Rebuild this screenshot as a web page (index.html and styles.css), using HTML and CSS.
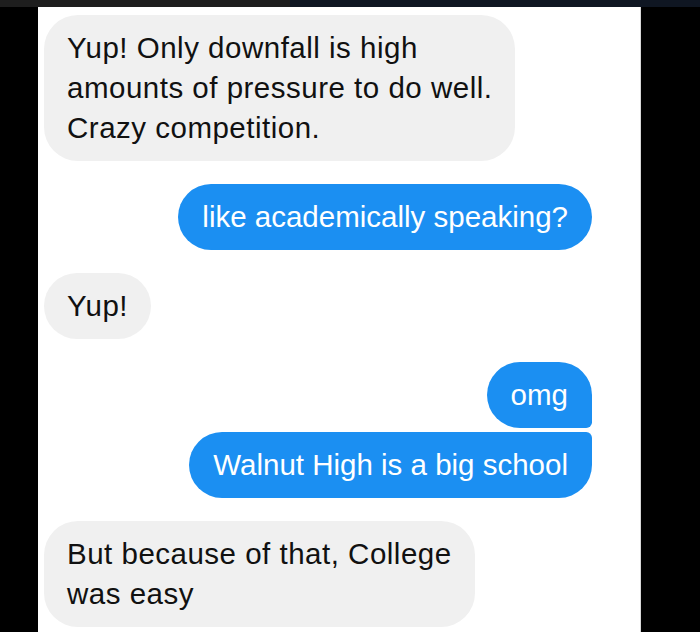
FILE: index.html
```html
<!DOCTYPE html>
<html lang="en">
<head>
<meta charset="utf-8">
<title>Chat</title>
<link rel="stylesheet" href="styles.css">
</head>
<body>
  <div class="topbar"></div>
  <div class="stage">
    <div class="chat">
      <div class="bubble in">Yup! Only downfall is high<br>amounts of pressure to do well.<br>Crazy competition.</div>
      <div class="bubble out">like academically speaking?</div>
      <div class="bubble in">Yup!</div>
      <div class="group">
        <div class="bubble out first">omg</div>
        <div class="bubble out last">Walnut High is a big school</div>
      </div>
      <div class="bubble in">But because of that, College<br>was easy</div>
    </div>
  </div>
</body>
</html>
```
FILE: styles.css
```css
html, body {
  margin: 0;
  padding: 0;
  background: #000;
  height: 632px;
  overflow: hidden;
}

.topbar {
  height: 7px;
  background: linear-gradient(to right, #1e1e1e 0, #1e1e1e 290px, #0f1622 290px, #0f1622 100%);
}

.stage {
  padding-left: 38px;
}

.chat {
  width: 603px;
  height: 625px;
  box-sizing: border-box;
  background: #fff;
  border-right: 1px solid #d8d8d8;
  padding: 8px 48px 0 6px;
  display: flex;
  flex-direction: column;
  gap: 23px;
  font-family: "Liberation Sans", Arial, sans-serif;
  font-size: 29.5px;
  line-height: 40px;
}

.group {
  display: flex;
  flex-direction: column;
  align-items: flex-end;
  gap: 4px;
}

.bubble {
  padding: 13px 23px;
  border-radius: 34px;
  width: fit-content;
  white-space: nowrap;
}

.in {
  align-self: flex-start;
  background: #f0f0f0;
  color: #111;
  letter-spacing: 0.5px;
}

.out {
  align-self: flex-end;
  background: #1b8ff2;
  color: #fff;
  padding-left: 24px;
  padding-right: 24px;
}

.out.first {
  border-bottom-right-radius: 6px;
}

.out.last {
  border-top-right-radius: 6px;
}
```
